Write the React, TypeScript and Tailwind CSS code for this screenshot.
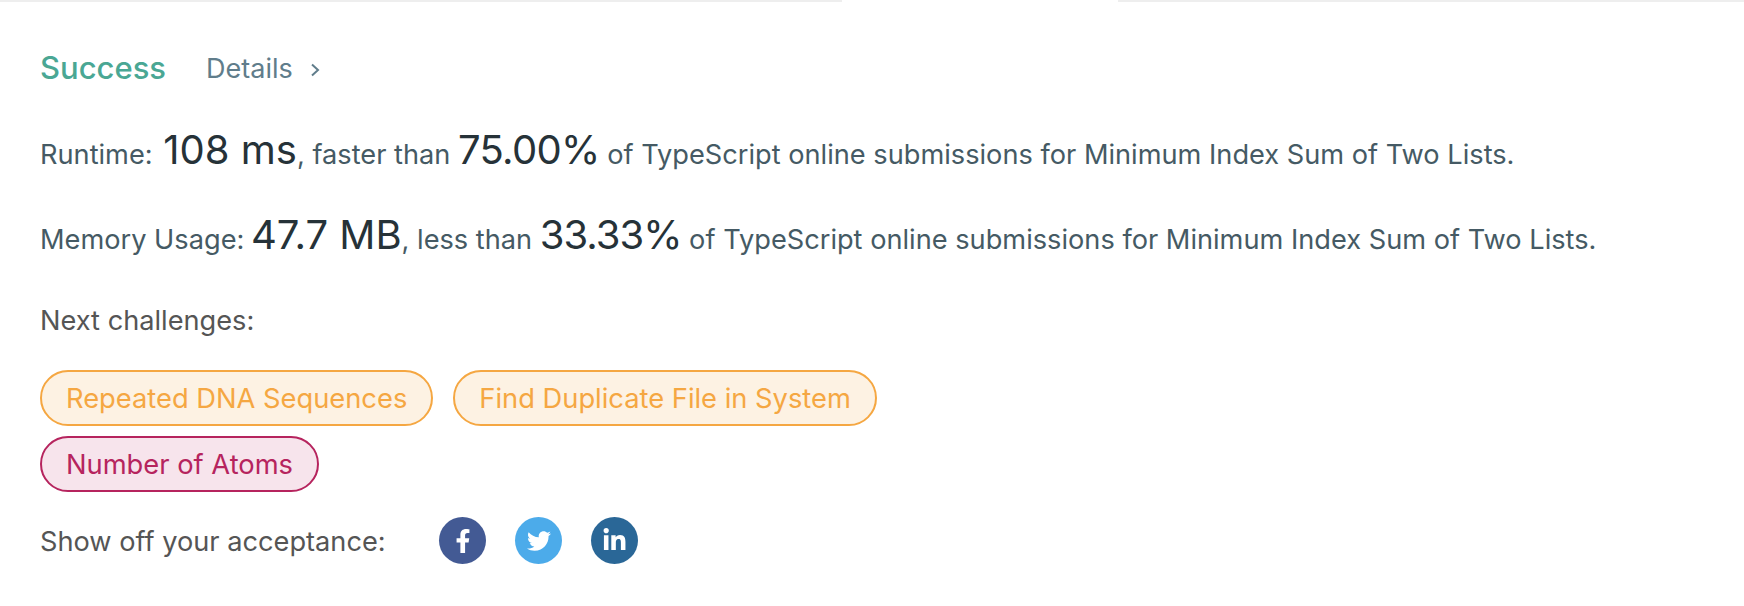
import React from "react";
import { FaFacebookF, FaTwitter, FaLinkedinIn } from "react-icons/fa";

const App = () => {
  return (
    <div className="w-[1744px] h-[606px] bg-white font-['Inter',sans-serif] overflow-hidden">
      <div className="flex h-[2px]">
        <div className="w-[842px] bg-[#eeeeee]" />
        <div className="w-[276px] bg-white" />
        <div className="flex-1 bg-[#eeeeee]" />
      </div>

      <div className="pl-[40px]">
        <div className="flex items-center h-[48px] mt-[42px]">
          <span className="text-[31px] font-medium text-[#4aa794]">Success</span>
          <span className="ml-[40px] mt-[3px] text-[27px] text-[#607d8b]">Details</span>
          <svg viewBox="0 0 12 16" className="ml-[16px] mt-[3px] w-[12px] h-[16px]" fill="none" stroke="#607d8b" strokeWidth="2">
            <path d="M3 2.5 L9 8 L3 13.5" />
          </svg>
        </div>

        <p className="mt-[28px] h-[60px] leading-[60px] text-[27.2px] text-[#455a64] whitespace-nowrap">
          Runtime: <span className="ml-[3px] text-[40px] text-[#263238]">108 ms</span>, faster than{" "}
          <span className="text-[40px] tracking-[-0.7px] text-[#263238]">75.00%</span> of TypeScript online submissions for Minimum Index Sum of Two Lists.
        </p>
        <p className="mt-[25px] h-[60px] leading-[60px] text-[27.2px] text-[#455a64] whitespace-nowrap">
          Memory Usage: <span className="-ml-[1px] text-[40px] text-[#263238]">47.7 MB</span>, less than{" "}
          <span className="text-[40px] tracking-[-1px] text-[#263238]">33.33%</span> of TypeScript online submissions for Minimum Index Sum of Two Lists.
        </p>

        <p className="mt-[38px] text-[27.2px] leading-[36px] text-[#555555]">Next challenges:</p>

        <div className="mt-[31px] flex gap-[20px]">
          <span className="h-[56px] px-[24px] pt-[2px] flex items-center rounded-[28px] border-2 border-[#f5a742] bg-[#fdf2e3] text-[27.3px] text-[#f5a742]">
            Repeated DNA Sequences
          </span>
          <span className="h-[56px] px-[24px] pt-[2px] flex items-center rounded-[28px] border-2 border-[#f5a742] bg-[#fdf2e3] text-[27.3px] text-[#f5a742]">
            Find Duplicate File in System
          </span>
        </div>
        <div className="mt-[10px] flex">
          <span className="h-[56px] px-[24px] pt-[2px] flex items-center rounded-[28px] border-2 border-[#b6245e] bg-[#f7e4ec] text-[27.3px] text-[#b6245e]">
            Number of Atoms
          </span>
        </div>

        <div className="mt-[25px] flex items-center">
          <span className="w-[399px] mt-[4px] text-[27.2px] text-[#555555]">Show off your acceptance:</span>
          <div className="flex gap-[29px]">
            <span className="w-[47px] h-[47px] rounded-full bg-[#435a94] flex items-center justify-center text-white text-[24px]">
              <FaFacebookF />
            </span>
            <span className="w-[47px] h-[47px] rounded-full bg-[#4cabea] flex items-center justify-center text-white text-[24px]">
              <FaTwitter />
            </span>
            <span className="w-[47px] h-[47px] rounded-full bg-[#2a6797] flex items-center justify-center text-white text-[25px]">
              <FaLinkedinIn />
            </span>
          </div>
        </div>
      </div>
    </div>
  );
};

export default App;
